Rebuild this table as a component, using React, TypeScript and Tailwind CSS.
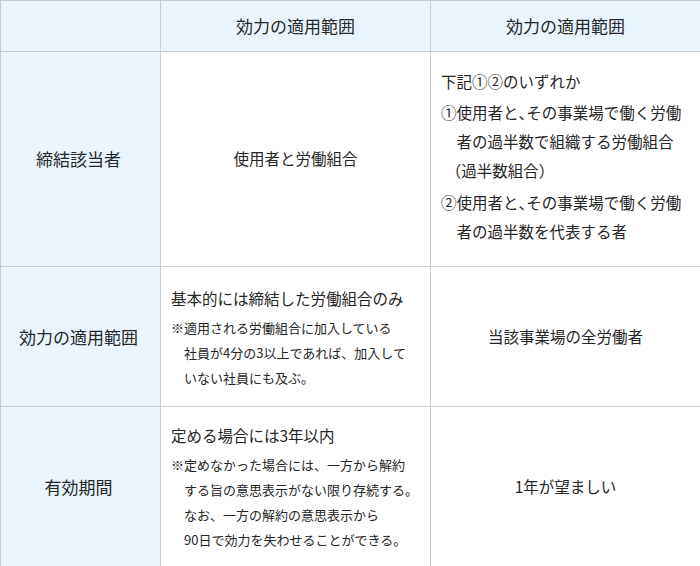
const font = { fontFamily: '"Noto Sans CJK JP", "Noto Sans", sans-serif' };

function Label({ children }: { children: React.ReactNode }) {
  return (
    <div className="flex items-center justify-center bg-[#e9f4fd] border-r border-b border-[#cccccc] text-[17px] pr-[4px]">
      {children}
    </div>
  );
}

function Cell({ children, center }: { children: React.ReactNode; center?: boolean }) {
  return (
    <div
      className={`flex flex-col justify-center border-r border-b border-[#cccccc] px-[10px] ${
        center ? 'items-center text-[15.5px]' : ''
      }`}
    >
      {children}
    </div>
  );
}

function Note({ lines }: { lines: string[] }) {
  return (
    <div className="text-[13px] leading-[25px] mt-[2px] whitespace-nowrap">
      {lines.map((l, i) => (
        <div key={i} className={i > 0 ? 'pl-[1em]' : ''}>
          {l}
        </div>
      ))}
    </div>
  );
}

// half-width comma, as in the original
const Comma = () => <span className="[font-feature-settings:'halt']">、</span>;

export default function App() {
  return (
    <div className="w-[700px] h-[566px] bg-white text-[#262626] overflow-hidden" style={font}>
      <div className="grid grid-cols-[160px_270px_270px] grid-rows-[51px_215px_140px_160px] border-l border-t border-[#cccccc]">
        {/* header */}
        <div className="bg-[#e9f4fd] border-r border-b border-[#cccccc]" />
        <div className="flex items-center justify-center bg-[#e9f4fd] border-r border-b border-[#cccccc] text-[17px]">
          効力の適用範囲
        </div>
        <div className="flex items-center justify-center bg-[#e9f4fd] border-r border-b border-[#cccccc] text-[17px]">
          効力の適用範囲
        </div>

        {/* 締結該当者 */}
        <Label>締結該当者</Label>
        <Cell center>使用者と労働組合</Cell>
        <Cell>
          <div className="text-[15.5px] leading-[29px] whitespace-nowrap -mt-[6px]">
            <div>下記①②のいずれか</div>
            <div className="mt-[2px]">
              ①使用者と<Comma />その事業場で働く労働
            </div>
            <div className="pl-[1em]">者の過半数で組織する労働組合</div>
            <div className="pl-[0.3em]">（過半数組合）</div>
            <div className="mt-[3px]">
              ②使用者と<Comma />その事業場で働く労働
            </div>
            <div className="pl-[1em]">者の過半数を代表する者</div>
          </div>
        </Cell>

        {/* 効力の適用範囲 */}
        <Label>効力の適用範囲</Label>
        <Cell>
          <div className="text-[15.5px] leading-[29px] whitespace-nowrap">基本的には締結した労働組合のみ</div>
          <Note lines={['※適用される労働組合に加入している', '社員が4分の3以上であれば、加入して', 'いない社員にも及ぶ。']} />
        </Cell>
        <Cell center>当該事業場の全労働者</Cell>

        {/* 有効期間 */}
        <Label>有効期間</Label>
        <Cell>
          <div className="text-[15.5px] leading-[29px] whitespace-nowrap">定める場合には3年以内</div>
          <Note
            lines={[
              '※定めなかった場合には、一方から解約',
              'する旨の意思表示がない限り存続する。',
              'なお、一方の解約の意思表示から',
              '90日で効力を失わせることができる。',
            ]}
          />
        </Cell>
        <Cell center>1年が望ましい</Cell>
      </div>
    </div>
  );
}
